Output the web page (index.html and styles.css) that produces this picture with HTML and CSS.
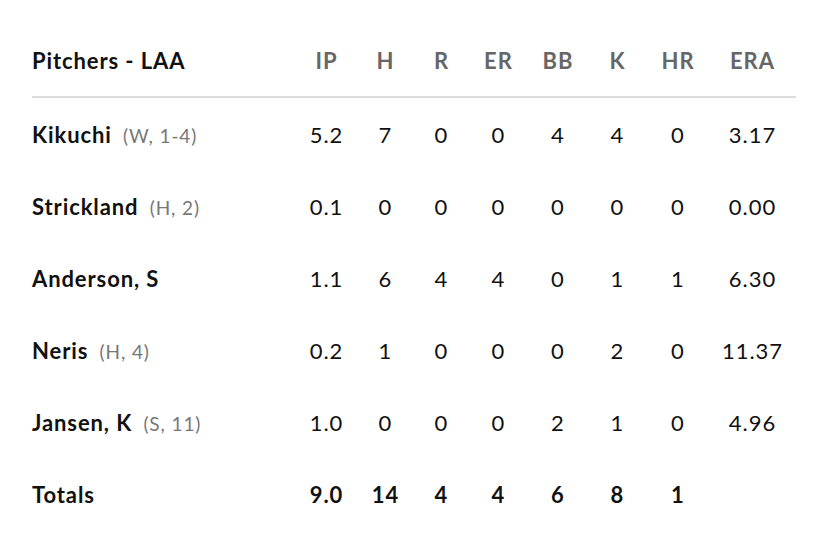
FILE: index.html
```html
<!DOCTYPE html>
<html>
<head>
<meta charset="utf-8">
<link rel="stylesheet" href="styles.css">
</head>
<body>
<div class="table">
  <div class="row head">
    <div class="name">Pitchers - LAA</div>
    <div>IP</div><div>H</div><div>R</div><div>ER</div><div>BB</div><div>K</div><div>HR</div><div>ERA</div>
  </div>
  <div class="row">
    <div class="name">Kikuchi <span class="note">(W, 1-4)</span></div>
    <div>5.2</div><div>7</div><div>0</div><div>0</div><div>4</div><div>4</div><div>0</div><div>3.17</div>
  </div>
  <div class="row">
    <div class="name">Strickland <span class="note">(H, 2)</span></div>
    <div>0.1</div><div>0</div><div>0</div><div>0</div><div>0</div><div>0</div><div>0</div><div>0.00</div>
  </div>
  <div class="row">
    <div class="name">Anderson, S</div>
    <div>1.1</div><div>6</div><div>4</div><div>4</div><div>0</div><div>1</div><div>1</div><div>6.30</div>
  </div>
  <div class="row">
    <div class="name">Neris <span class="note">(H, 4)</span></div>
    <div>0.2</div><div>1</div><div>0</div><div>0</div><div>0</div><div>2</div><div>0</div><div>11.37</div>
  </div>
  <div class="row">
    <div class="name">Jansen, K <span class="note">(S, 11)</span></div>
    <div>1.0</div><div>0</div><div>0</div><div>0</div><div>2</div><div>1</div><div>0</div><div>4.96</div>
  </div>
  <div class="row total">
    <div class="name">Totals</div>
    <div>9.0</div><div>14</div><div>4</div><div>4</div><div>6</div><div>8</div><div>1</div><div></div>
  </div>
</div>
</body>
</html>
```

FILE: styles.css
```css
html, body {
  margin: 0;
  padding: 0;
  background: #fff;
}
body {
  font-family: Lato, "Open Sans", sans-serif;
  color: #111;
}
.table {
  padding: 24px 32px 0 32px;
  width: 764px;
}
.row {
  display: grid;
  grid-template-columns: 264px 61px 57px 55px 59px 60px 59px 62px 87px;
  align-items: center;
  height: 72px;
  font-size: 22px;
  letter-spacing: 1px;
  text-align: center;
}
.row .name {
  text-align: left;
  font-weight: 700;
  letter-spacing: 0.9px;
}
.head {
  height: 72px;
  border-bottom: 2px solid #dcdcdc;
  font-weight: 700;
  color: #666;
}
.head .name {
  color: #111;
}
.note {
  font-weight: 400;
  color: #777;
  font-size: 19px;
  margin-left: 5px;
  letter-spacing: 0.9px;
}
.total {
  font-weight: 700;
}
```
